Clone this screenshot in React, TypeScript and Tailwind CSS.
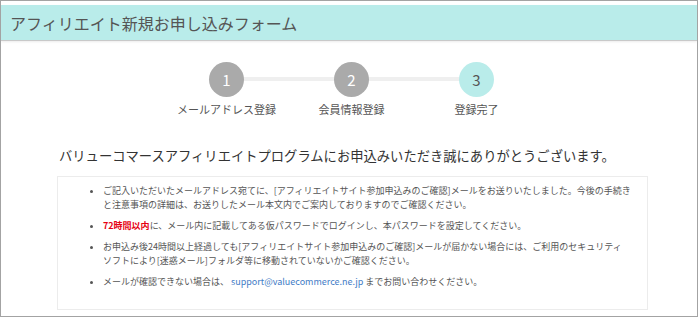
import React from "react";

const steps = [
  { no: 1, label: "メールアドレス登録", done: true },
  { no: 2, label: "会員情報登録", done: true },
  { no: 3, label: "登録完了", done: false },
];

const App = () => {
  return (
    <div
      className="w-[698px] h-[317px] overflow-hidden border border-[#a3a3a3] bg-white text-[#555]"
      style={{ fontFamily: '"Noto Sans CJK JP", "Noto Sans", sans-serif' }}
    >
      <div className="pt-[4px]">
        <div className="h-[36px] bg-[#b9ecea] border-b border-[#c9c9c9] shadow-[0_1px_2px_rgba(0,0,0,0.08)] flex items-center pl-[9px]">
          <h1 className="text-[16px] text-[#555] leading-none">アフィリエイト新規お申し込みフォーム</h1>
        </div>
      </div>

      {/* steps */}
      <div className="flex justify-center mt-[21px] pl-[5px]">
        {steps.map((s, i) => (
          <div key={s.no} className="relative w-[125px] flex flex-col items-center">
            {i < steps.length - 1 && (
              <div className="absolute top-[15px] left-[62px] w-[125px] h-[4px] bg-[#efefef]" />
            )}
            <div
              className={
                "relative z-10 w-[35px] h-[35px] rounded-full flex items-center justify-center text-[15px] leading-none " +
                (s.done ? "bg-[#aaaaaa] text-white" : "bg-[#b9ecea] text-[#555]")
              }
            >
              {s.no}
            </div>
            <div className="mt-[5px] text-[11px] leading-[14px] text-[#555] whitespace-nowrap">{s.label}</div>
          </div>
        ))}
      </div>

      <div className="ml-[56px] w-[591px]">
        <h2 className="mt-[31px] text-[13.3px] leading-[18px] text-[#333] pl-[2px]">
          バリューコマースアフィリエイトプログラムにお申込みいただき誠にありがとうございます。
        </h2>
        <div className="mt-[11px] h-[134px] border border-[#ececec] pt-[7px] pl-[36px] pr-[10px]">
          <ul className="list-disc pl-[9px] text-[9px] leading-[14px] text-[#555] flex flex-col gap-[7px]">
            <li>
              ご記入いただいたメールアドレス宛てに、[アフィリエイトサイト参加申込みのご確認]メールをお送りいたしました。今後の手続き
              <br />
              と注意事項の詳細は、お送りしたメール本文内でご案内しておりますのでご確認ください。
            </li>
            <li>
              <span className="text-[#e60012] font-bold">72時間以内</span>
              に、メール内に記載してある仮パスワードでログインし、本パスワードを設定してください。
            </li>
            <li>
              お申込み後24時間以上経過しても[アフィリエイトサイト参加申込みのご確認]メールが届かない場合には、ご利用のセキュリティ
              <br />
              ソフトにより[迷惑メール]フォルダ等に移動されていないかご確認ください。
            </li>
            <li>
              メールが確認できない場合は、 <span className="text-[#3f7cc6]">support@valuecommerce.ne.jp</span> までお問い合わせください。
            </li>
          </ul>
        </div>
      </div>
    </div>
  );
};

export default App;
